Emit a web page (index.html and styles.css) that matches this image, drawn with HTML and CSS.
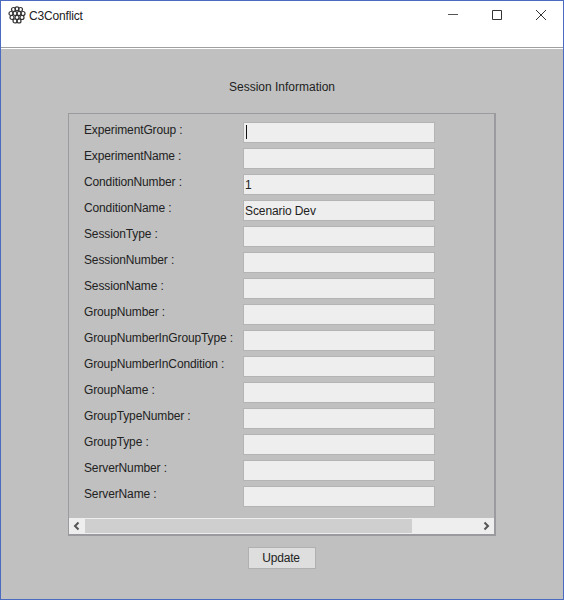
FILE: index.html
```html
<!DOCTYPE html>
<html>
 <head>
  <title>C3Conflict</title>
  <link rel="stylesheet" href="styles.css">
 </head>
 <body>
 <div id="window">
  <div id="titlebar">
    <svg class="logo" width="18" height="18" viewBox="0 0 18 18" fill="none" stroke="#333" stroke-width="1.2">
      <circle cx="5.5" cy="3.5" r="2"/><circle cx="9" cy="2.8" r="2"/><circle cx="12.5" cy="3.5" r="2"/>
      <circle cx="3" cy="7.5" r="2"/><circle cx="7" cy="7.5" r="2"/><circle cx="11" cy="7.5" r="2"/><circle cx="15" cy="7.5" r="2"/>
      <circle cx="4" cy="11.5" r="2"/><circle cx="9" cy="11.5" r="2"/><circle cx="14" cy="11.5" r="2"/>
      <circle cx="7" cy="15" r="2"/><circle cx="11" cy="15" r="2"/>
    </svg>
    <span class="title">C3Conflict</span>
    <div class="controls">
      <svg width="12" height="12" viewBox="0 0 12 12"><path d="M1 5.5h10" stroke="#555" fill="none"/></svg>
      <svg width="12" height="12" viewBox="0 0 12 12"><path d="M1.5 1.5h9v9h-9z" stroke="#333" fill="none"/></svg>
      <svg width="12" height="12" viewBox="0 0 12 12"><path d="M1 1l10 10M11 1L1 11" stroke="#333" fill="none"/></svg>
    </div>
  </div>
  <div id="content">
    <h2>Session Information</h2>
    <div id="panel">
      <div id="fields">
        <div class="entry"><label>ExperimentGroup :</label><div class="input"><i class="caret"></i></div></div>
        <div class="entry"><label>ExperimentName :</label><div class="input"></div></div>
        <div class="entry"><label>ConditionNumber :</label><div class="input">1</div></div>
        <div class="entry"><label>ConditionName :</label><div class="input">Scenario Dev</div></div>
        <div class="entry"><label>SessionType :</label><div class="input"></div></div>
        <div class="entry"><label>SessionNumber :</label><div class="input"></div></div>
        <div class="entry"><label>SessionName :</label><div class="input"></div></div>
        <div class="entry"><label>GroupNumber :</label><div class="input"></div></div>
        <div class="entry"><label>GroupNumberInGroupType :</label><div class="input"></div></div>
        <div class="entry"><label>GroupNumberInCondition :</label><div class="input"></div></div>
        <div class="entry"><label>GroupName :</label><div class="input"></div></div>
        <div class="entry"><label>GroupTypeNumber :</label><div class="input"></div></div>
        <div class="entry"><label>GroupType :</label><div class="input"></div></div>
        <div class="entry"><label>ServerNumber :</label><div class="input"></div></div>
        <div class="entry"><label>ServerName :</label><div class="input"></div></div>
      </div>
      <div id="scrollbar">
        <svg width="16" height="16" viewBox="0 0 16 16"><path d="M9.5 4.5L6 8l3.5 3.5" stroke="#555" stroke-width="2" fill="none"/></svg>
        <div class="thumb"></div>
        <svg width="16" height="16" viewBox="0 0 16 16"><path d="M6.5 4.5L10 8l-3.5 3.5" stroke="#555" stroke-width="2" fill="none"/></svg>
      </div>
    </div>
    <button id="update">Update</button>
  </div>
 </div>
</body>
</html>
```

FILE: styles.css
```css
html, body {
  margin: 0;
  height: 100%;
}
body {
  font-family: "Liberation Sans", Arial, sans-serif;
  font-size: 12px;
  color: #222;
}
#window {
  height: 600px;
  box-sizing: border-box;
  border: 1px solid #4a6bc0;
  display: flex;
  flex-direction: column;
  background: #fff;
}
#titlebar {
  height: 47px;
  display: flex;
  align-items: flex-start;
  padding: 5px 0 0 7px;
  box-sizing: border-box;
  border-bottom: 1px solid #a0a0a0;
}
.title {
  margin: 3px 0 0 3px;
  letter-spacing: -0.17px;
}
.controls {
  margin-left: auto;
  display: flex;
  gap: 32px;
  padding: 3px 16px 0 0;
}
#content {
  flex: 1;
  background: #c0c0c0;
  border-top: 1px solid #fff;
  display: flex;
  flex-direction: column;
  align-items: center;
}
h2 {
  font-size: 12px;
  font-weight: normal;
  margin: 31px 0 19px;
  line-height: 14px;
}
#panel {
  width: 428px;
  height: 423px;
  box-sizing: border-box;
  border: 2px solid #9a9a9f;
  border-width: 1px 2px 2px 1px;
  display: flex;
  flex-direction: column;
}
#fields {
  flex: 1;
  padding: 8px 0 0 15px;
  display: flex;
  flex-direction: column;
  gap: 4px;
}
.entry {
  display: flex;
  height: 22px;
}
.entry label {
  width: 159px;
  line-height: 17px;
  flex: none;
  letter-spacing: -0.13px;
}
.input {
  width: 190px;
  height: 21px;
  background: #eeeeee;
  outline: 1px solid #b4b4b4;
  outline-offset: -1px;
  padding-left: 2px;
  line-height: 23px;
  letter-spacing: -0.1px;
}
.caret {
  display: block;
  width: 1px;
  height: 14px;
  margin: 3px 0 0 1px;
  background: #111;
}
#scrollbar {
  height: 16px;
  background: #eeeeee;
  display: flex;
  justify-content: space-between;
  align-items: center;
}
.thumb {
  flex: 1;
  height: 14px;
  background: #cfcfcf;
  margin-right: 66px;
}
#update {
  margin-top: 11px;
  width: 68px;
  height: 22px;
  font: 12px "Liberation Sans", Arial, sans-serif;
  letter-spacing: -0.17px;
  color: #222;
  background: #dedede;
  border: 1px solid #b0b0b0;
  padding: 0 2px 0 0;
}
```
